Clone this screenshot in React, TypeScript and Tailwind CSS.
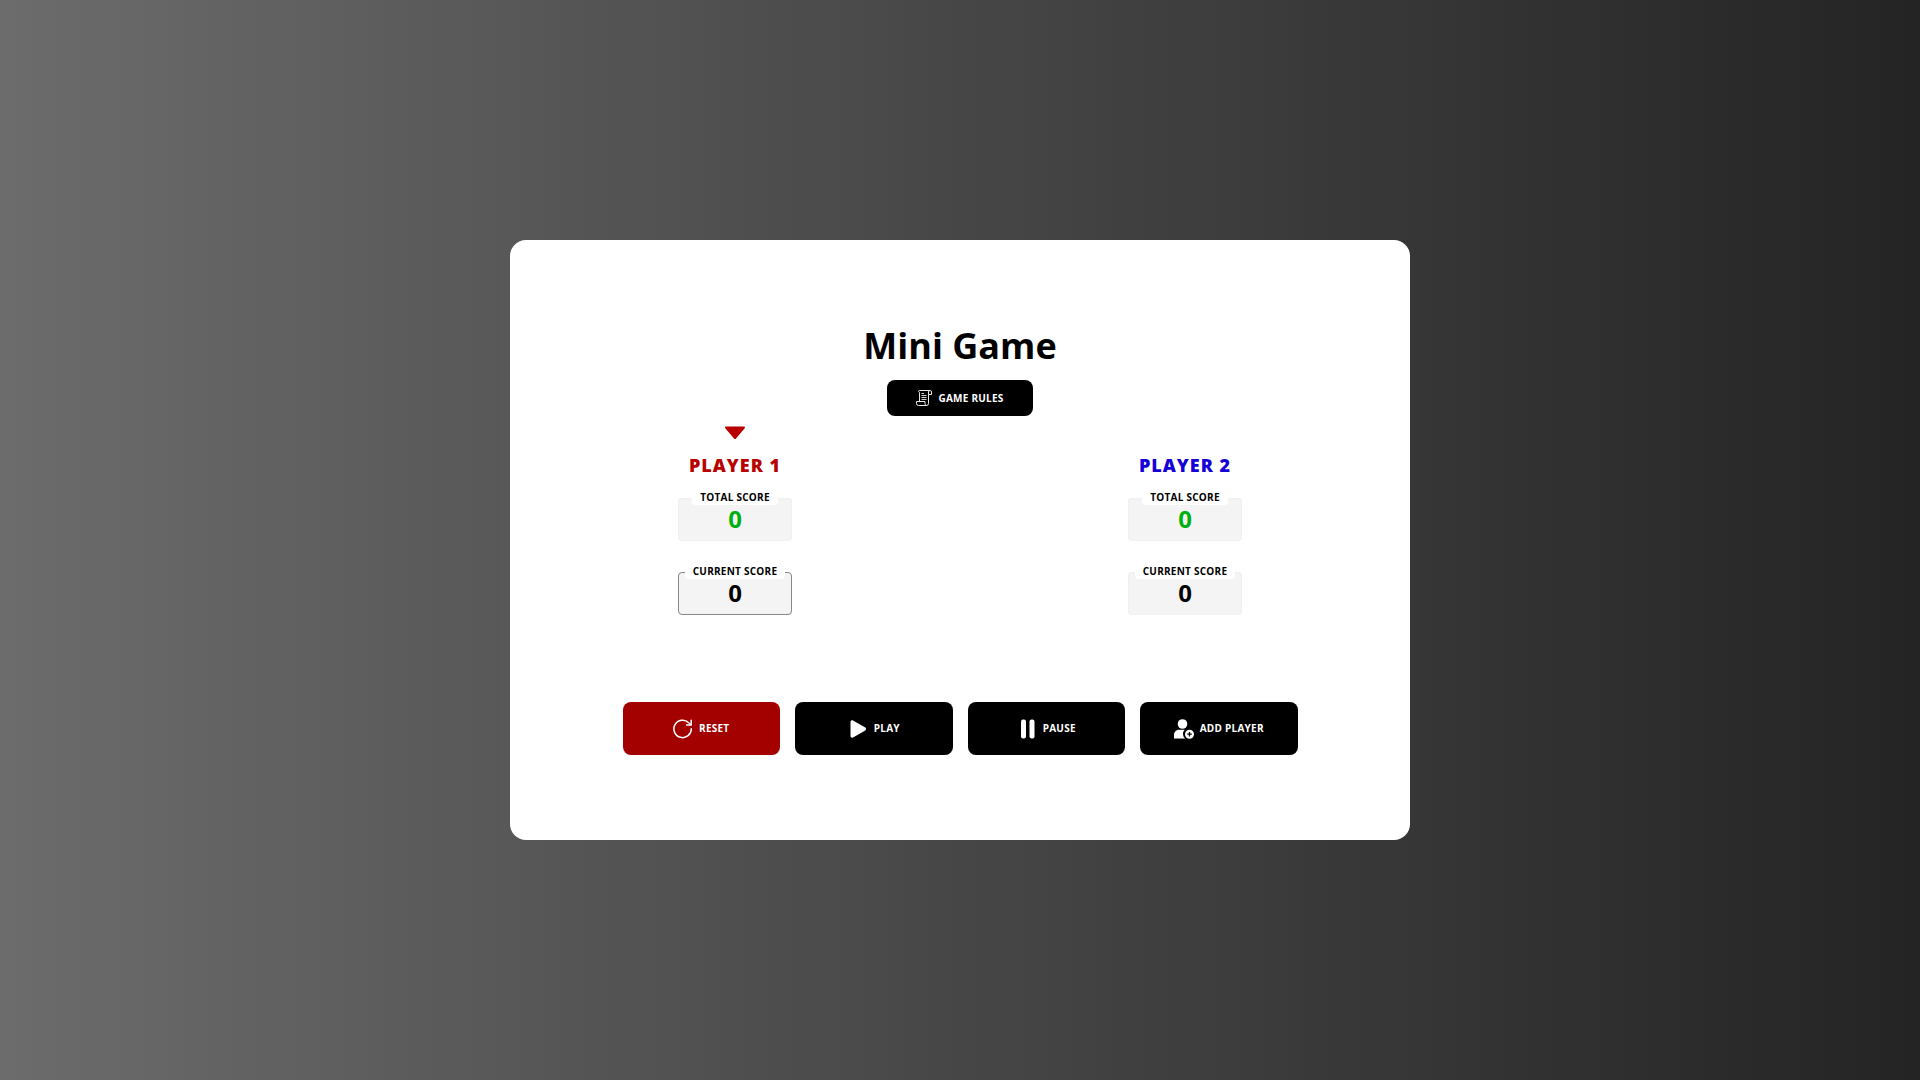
import type { ReactNode } from 'react'

interface Player {
  name: string
  nameColor: string
  total: number
  current: number
  active: boolean
}

const PLAYERS: Player[] = [
  { name: 'Player 1', nameColor: 'text-[#b80000]', total: 0, current: 0, active: true },
  { name: 'Player 2', nameColor: 'text-[#1500d8]', total: 0, current: 0, active: false },
]

function ScrollIcon() {
  return (
    <svg className="size-4" viewBox="0 0 16 16" fill="none" stroke="#e8e8e8" strokeLinejoin="round" aria-hidden="true">
      <path d="M3.500 11.500V3a2 2 0 0 0-.8-1.500c-.4-.5 0-1 .6-1h10.700a1.500 1.500 0 0 1 1.500 1.500v2.500h-3" />
      <path d="M12.500 4.500V2A1.500 1.500 0 0 1 14 .5M12.500 4.500v9a2 2 0 0 1-2 2h-8a2 2 0 0 1-2-2v-2h8.500v2a1.800 1.800 0 0 0 1.500 2" />
      <path d="M5.500 3.500h2.500M5.500 5.500h5M5.500 7.500h5M5.500 9.500h5" strokeWidth="0.900" />
    </svg>
  )
}

function ResetIcon() {
  return (
    <svg className="size-5" viewBox="0 0 20 20" fill="none" stroke="#fff" strokeWidth="1.500" strokeLinecap="round" strokeLinejoin="round" aria-hidden="true">
      <path d="M18.300 9.700a8.700 8.700 0 1 1-2.600-6l2.300 2" />
      <path d="M18.200 1.200v4.700h-4.600" />
    </svg>
  )
}

function PlayIcon() {
  return (
    <svg className="size-5" viewBox="0 0 20 20" fill="#fff" aria-hidden="true">
      <path d="M2.500 3v14c0 1.400 1.400 2 2.500 1.400l12.300-7c1-.6 1-2.200 0-2.800L5 1.600C3.900 1 2.500 1.600 2.500 3z" />
    </svg>
  )
}

function PauseIcon() {
  return (
    <svg className="size-5" viewBox="0 0 20 20" fill="#fff" aria-hidden="true">
      <rect x="4" y="0.500" width="5" height="19" rx="2" />
      <rect x="12.500" y="0.500" width="5" height="19" rx="2" />
    </svg>
  )
}

function AddPlayerIcon() {
  return (
    <svg className="size-5" viewBox="0 0 20 20" aria-hidden="true">
      <circle cx="8.500" cy="5" r="4.800" fill="#fff" />
      <path d="M0 19.500V16c0-3 2.200-5.200 5.200-5.200h5.600A5.600 5.600 0 0 0 11.300 19.500z" fill="#fff" />
      <circle cx="15.500" cy="15.200" r="4.500" fill="#fff" />
      <path d="M15.500 12.900v4.600M13.200 15.200h4.600" stroke="#000" strokeWidth="1.300" />
    </svg>
  )
}

function ScoreBox({
  label,
  value,
  valueColor,
  border,
}: {
  label: string
  value: number
  valueColor: string
  border: string
}) {
  return (
    <fieldset className={`w-[114px] rounded border bg-[#f4f4f4] ${border}`}>
      <legend className="mx-auto rounded bg-white px-2 pb-0.5 text-[10px] leading-[12px] font-bold tracking-wide uppercase">
        {label}
      </legend>
      <output className={`block h-[35px] text-center text-2xl leading-[28px] font-bold ${valueColor}`}>
        {value}
      </output>
    </fieldset>
  )
}

function PlayerPanel({ player }: { player: Player }) {
  return (
    <section className="flex flex-1 flex-col items-center">
      <div className="h-[14px]">
        {player.active && (
          <svg className="h-[14px] w-5" viewBox="0 0 20 14" fill="#b80000" aria-hidden="true">
            <path d="M1.200 0.500h17.600c1 0 1.500 1 .9 1.800l-8.700 10.200c-.5.700-1.500.7-2 0L.3 2.300C-.3 1.500.2.5 1.200.5z" />
          </svg>
        )}
      </div>
      <h2 className={`mt-3 mb-3 text-[18px] leading-[27px] font-extrabold tracking-[1px] uppercase ${player.nameColor}`}>
        {player.name}
      </h2>
      <div className="flex flex-col gap-6">
        <ScoreBox label="Total score" value={player.total} valueColor="text-[#00b010]" border="border-[#f0f0f0]" />
        <ScoreBox
          label="Current score"
          value={player.current}
          valueColor="text-black"
          border={player.active ? 'border-[#888888]' : 'border-[#f0f0f0]'}
        />
      </div>
    </section>
  )
}

function ActionButton({ icon, color, children }: { icon: ReactNode; color: string; children: ReactNode }) {
  return (
    <button
      type="button"
      className={`flex h-[53px] flex-1 items-center justify-center gap-1.5 rounded-lg text-[10px] font-bold tracking-wide text-white uppercase ${color}`}
    >
      {icon}
      {children}
    </button>
  )
}

export default function App() {
  return (
    <main className="flex min-h-screen items-center justify-center bg-linear-to-r from-[#6c6c6c] to-[#242424] font-['Open_Sans','Noto_Sans',sans-serif] text-black">
      <div className="flex min-h-[600px] w-full max-w-[900px] flex-col items-center justify-center rounded-2xl bg-white">
        <h1 className="text-[36px] leading-[41px] font-bold">Mini Game</h1>
        <button
          type="button"
          className="mt-[14px] flex h-9 w-[146px] items-center justify-center gap-1.5 rounded-lg bg-black text-[10px] font-bold tracking-wide text-white uppercase"
        >
          <ScrollIcon />
          Game rules
        </button>

        <div className="mt-[10px] flex w-full">
          {PLAYERS.map(player => (
            <PlayerPanel key={player.name} player={player} />
          ))}
        </div>

        <div className="mt-[87px] flex w-3/4 gap-[15px]">
          <ActionButton icon={<ResetIcon />} color="bg-[#a30000]">Reset</ActionButton>
          <ActionButton icon={<PlayIcon />} color="bg-black">Play</ActionButton>
          <ActionButton icon={<PauseIcon />} color="bg-black">Pause</ActionButton>
          <ActionButton icon={<AddPlayerIcon />} color="bg-black">Add player</ActionButton>
        </div>
      </div>
    </main>
  )
}
